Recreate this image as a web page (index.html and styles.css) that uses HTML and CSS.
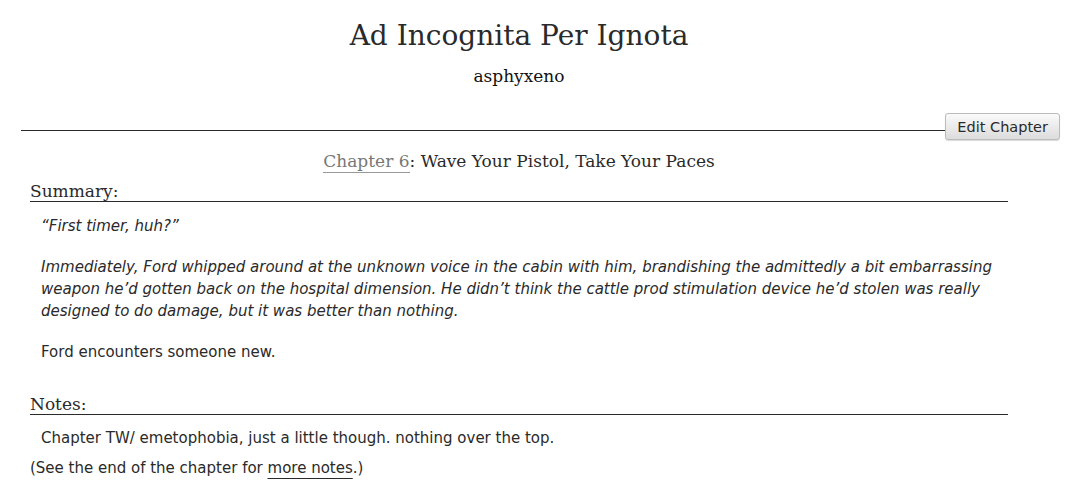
FILE: index.html
```html
<!DOCTYPE html>
<html>
<head>
<meta charset="utf-8">
<link rel="stylesheet" href="styles.css">
</head>
<body>
<div class="preface">
  <h2 class="title">Ad Incognita Per Ignota</h2>
  <h3 class="byline">asphyxeno</h3>
</div>
<div class="chapter-bar">
  <div class="rule"></div>
  <button class="edit">Edit Chapter</button>
</div>
<h3 class="chapter-title"><a href="#" class="chap-link">Chapter 6</a>: Wave Your Pistol, Take Your Paces</h3>
<div class="module">
  <h3 class="heading">Summary:</h3>
  <blockquote class="userstuff">
    <p><em>“First timer, huh?”</em></p>
    <p><em>Immediately, Ford whipped around at the unknown voice in the cabin with him, brandishing the admittedly a bit embarrassing weapon he’d gotten back on the hospital dimension. He didn’t think the cattle prod stimulation device he’d stolen was really designed to do damage, but it was better than nothing.</em></p>
    <p>Ford encounters someone new.</p>
  </blockquote>
</div>
<div class="module notes">
  <h3 class="heading">Notes:</h3>
  <blockquote class="userstuff">
    <p>Chapter TW/ emetophobia, just a little though. nothing over the top.</p>
  </blockquote>
  <p class="jump">(See the end of the chapter for <a href="#" class="more">more notes</a>.)</p>
</div>
</body>
</html>
```
FILE: styles.css
```css
body {
  margin: 0;
  background: #fff;
  color: #2a2a2a;
  font-family: "DejaVu Sans", Verdana, sans-serif;
  font-size: 15px;
}
.preface {
  text-align: center;
  padding-top: 18px;
  padding-right: 38px;
}
.title {
  font-family: "DejaVu Serif", Georgia, serif;
  font-weight: normal;
  font-size: 28px;
  margin: 0;
  line-height: 36px;
  color: #2a2a2a;
}
.byline {
  font-family: "DejaVu Serif", Georgia, serif;
  font-weight: normal;
  font-size: 17px;
  margin: 11px 0 0;
  line-height: 22px;
  color: #111;
}
.chapter-bar {
  display: flex;
  align-items: flex-start;
  margin: 26px 16px 0 21px;
}
.rule {
  flex: 1;
  border-bottom: 1px solid #2a2a2a;
  height: 17px;
}
.edit {
  font-family: "DejaVu Sans", Verdana, sans-serif;
  font-size: 14.5px;
  color: #2a2a2a;
  background: linear-gradient(#fafafa, #dcdcdc);
  border: 1px solid #bbb;
  border-radius: 3px;
  height: 27px;
  padding: 0 11px;
  box-shadow: 0 1px 1px rgba(0,0,0,0.15);
}
.chapter-title {
  font-family: "DejaVu Serif", Georgia, serif;
  font-weight: normal;
  font-size: 17px;
  text-align: center;
  margin: 9px 0 0;
  padding-right: 38px;
  line-height: 24px;
}
.chap-link {
  color: #777;
  text-decoration: none;
  border-bottom: 1px solid #999;
  padding-bottom: 1px;
}
.module {
  margin: 8px 68px 0 30px;
}
.notes {
  margin-top: 31px;
}
.heading {
  font-family: "DejaVu Serif", Georgia, serif;
  font-weight: normal;
  font-size: 17px;
  margin: 0;
  line-height: 20px;
  border-bottom: 1px solid #2a2a2a;
}
.userstuff {
  margin: 13px 0 0 11px;
}
.userstuff p {
  margin: 0 0 19px;
  line-height: 22px;
}
.notes .userstuff {
  margin-top: 12px;
}
.notes .userstuff p {
  margin-bottom: 8px;
}
.jump {
  margin: 0;
  line-height: 22px;
}
.more {
  color: #2a2a2a;
  text-decoration: underline;
  text-decoration-thickness: 1px;
  text-underline-offset: 5px;
}
```
